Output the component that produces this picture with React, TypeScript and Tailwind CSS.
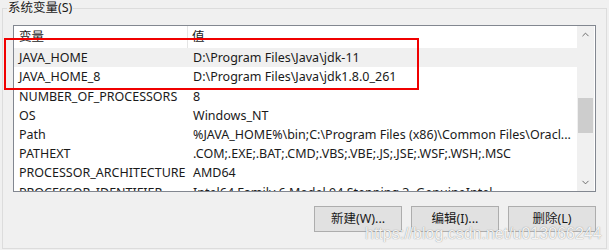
import { ChevronUp, ChevronDown } from 'lucide-react'

const rows = [
  { name: 'JAVA_HOME', value: 'D:\\Program Files\\Java\\jdk-11', selected: true },
  { name: 'JAVA_HOME_8', value: 'D:\\Program Files\\Java\\jdk1.8.0_261' },
  { name: 'NUMBER_OF_PROCESSORS', value: '8' },
  { name: 'OS', value: 'Windows_NT' },
  { name: 'Path', value: '%JAVA_HOME%\\bin;C:\\Program Files (x86)\\Common Files\\Oracl...' },
  { name: 'PATHEXT', value: '.COM;.EXE;.BAT;.CMD;.VBS;.VBE;.JS;.JSE;.WSF;.WSH;.MSC' },
  { name: 'PROCESSOR_ARCHITECTURE', value: 'AMD64' },
  { name: 'PROCESSOR_IDENTIFIER', value: 'Intel64 Family 6 Model 94 Stepping 3, GenuineIntel' },
]

function WinButton({ label }: { label: string }) {
  return (
    <button className="w-[88px] h-[26px] border border-[#adadad] bg-[#e1e1e1] text-[12.5px] text-[#1a1a1a] flex items-center justify-center">
      {label}
    </button>
  )
}

export default function App() {
  return (
    <div
      className="relative w-[609px] h-[250px] bg-[#f0f0f0] overflow-hidden pt-[8px] pl-[2px] text-[12.5px] text-[#1a1a1a]"
      style={{ fontFamily: '"Noto Sans", "Noto Sans CJK SC", sans-serif' }}
    >
      {/* Group box */}
      <div className="relative w-[605px] h-[241px] border border-[#dcdcdc] pt-[16px] pl-[10px]">
        <span className="absolute left-[4px] top-[-9px] bg-[#f0f0f0] px-[1px] leading-[16px]">
          系统变量(S)
        </span>

        {/* List view */}
        <div className="w-[583px] h-[167px] border border-[#828790] bg-white flex overflow-hidden">
          <div className="w-[563px] flex flex-col">
            <div className="h-[22px] flex items-center shrink-0">
              <div className="w-[174px] h-full pl-[5px] flex items-center border-r border-[#e5e5e5]">变量</div>
              <div className="pl-[4px]">值</div>
            </div>
            {rows.map((r) => (
              <div
                key={r.name}
                className={`h-[19.2px] flex items-center shrink-0 whitespace-nowrap pt-[2px] ${r.selected ? 'bg-[#f0f0f0]' : ''}`}
              >
                <div className="w-[174px] pl-[5px]">{r.name}</div>
                <div className="pl-[5px]">{r.value}</div>
              </div>
            ))}
          </div>
          {/* Scrollbar */}
          <div className="w-[17px] bg-[#f0f0f0] flex flex-col items-center">
            <div className="h-[17px] flex items-center justify-center text-[#606060]">
              <ChevronUp size={11} strokeWidth={2} />
            </div>
            <div className="flex-1 w-full px-[1px] pt-[55px]">
              <div className="h-[35px] bg-[#cdcdcd]" />
            </div>
            <div className="h-[17px] flex items-center justify-center text-[#606060]">
              <ChevronDown size={11} strokeWidth={2} />
            </div>
          </div>
        </div>

        {/* Buttons */}
        <div className="w-[583px] flex justify-end gap-[9px] mt-[14px]">
          <WinButton label="新建(W)..." />
          <WinButton label="编辑(I)..." />
          <WinButton label="删除(L)" />
        </div>
      </div>

      {/* Red highlight */}
      <div className="absolute left-[4px] top-[38px] w-[415px] h-[52px] border-2 border-[#f00000]" />

      {/* Watermark */}
      <div
        className="absolute left-[365px] top-[222px] text-[16px] text-white/90 [text-shadow:0_0_1px_rgba(90,90,90,0.8)]"
        style={{ fontFamily: '"Liberation Sans", sans-serif' }}
      >
        https://blog.csdn.net/u013066244
      </div>
    </div>
  )
}
